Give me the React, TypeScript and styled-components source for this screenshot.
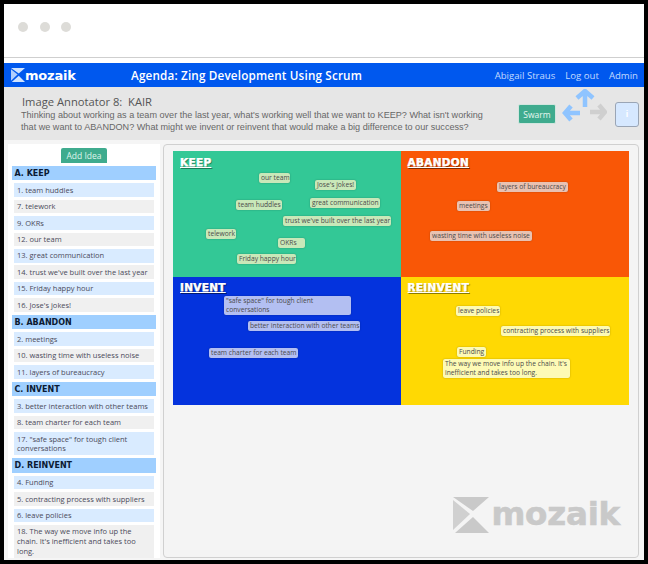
import styled, { createGlobalStyle } from 'styled-components';

const GlobalStyle = createGlobalStyle`
  html, body {
    margin: 0;
    padding: 0;
    background: #000;
  }
  * {
    box-sizing: border-box;
  }
`;

const Frame = styled.div`
  width: 648px;
  height: 564px;
  padding: 4px 4px 4px;
  background: #000;
  overflow: hidden;
`;

const Win = styled.div`
  height: 556px;
  background: #f5f5f5;
  display: flex;
  flex-direction: column;
  overflow: hidden;
`;

const Chrome = styled.div`
  height: 59px;
  padding-bottom: 5px;
  background: #fff;
  flex: none;
`;

const ChromeBar = styled.div`
  height: 54px;
  border-bottom: 1.5px solid #cfcfcf;
  padding: 18px 0 0 14px;
  display: flex;
  gap: 11.5px;
`;

const Dot = styled.span`
  width: 10px;
  height: 10px;
  border-radius: 50%;
  background: #dddcd8;
`;

const Nav = styled.div`
  height: 24px;
  flex: none;
  background: #0058ee;
  display: flex;
  align-items: center;
  padding: 0 6px 0 7px;
  color: #fff;
`;

const Brand = styled.div`
  width: 120px;
  display: flex;
  align-items: center;
  font: bold 13px 'DejaVu Sans', sans-serif;
  letter-spacing: -0.2px;
`;

const NavTitle = styled.div`
  flex: 1;
  font: 600 11.7px 'Open Sans', sans-serif;
  letter-spacing: 0.17px;
`;

const NavLink = styled.a`
  margin-left: 10px;
  font: 9.6px 'Open Sans', sans-serif;
  color: #c3dbff;
`;

const Header = styled.div`
  height: 53px;
  flex: none;
  background: #e6e6e6;
  display: flex;
  padding: 8px 6px 0 17px;
`;

const HeaderText = styled.div`
  width: 497px;
  flex: none;
  color: #666;
`;

const HeaderTitle = styled.div`
  font: 11.2px/13px 'Open Sans', sans-serif;
  color: #555;
  padding-left: 1px;
`;

const Prompt = styled.div`
  font: 9.1px/12px 'Liberation Sans', sans-serif;
  color: #666;
  margin-top: 1px;
  white-space: nowrap;
`;

const SwarmBtn = styled.button`
  width: 38px;
  height: 20px;
  flex: none;
  margin-top: 9px;
  padding: 0;
  background: #3fab8e;
  border: 1px solid #d2e6df;
  border-radius: 2px;
  color: #e6f7f0;
  font: 8.5px 'Open Sans', sans-serif;
`;

const Arrows = styled.svg`
  width: 46px;
  height: 34px;
  margin: -6px 0 0 5px;
  flex: none;
`;

const InfoBtn = styled.div`
  width: 24px;
  height: 25px;
  flex: none;
  margin: 7px 0 0 8px;
  background: #d6e8ff;
  border: 1px solid #9aa5b5;
  border-radius: 3px;
  color: #fff;
  font: bold 9px/23px 'Liberation Sans', sans-serif;
  text-align: center;
`;

const Body = styled.div`
  flex: 1;
  min-height: 0;
  display: flex;
  padding: 4px 5px 2px 4px;
  gap: 3px;
`;

const Sidebar = styled.div`
  width: 152px;
  flex: none;
  padding: 4px 4px 0;
  background: #fff;
  overflow: hidden;
  display: flex;
  flex-direction: column;
`;

const AddIdea = styled.button`
  align-self: center;
  width: 46px;
  height: 15px;
  flex: none;
  padding: 0;
  margin-bottom: 3px;
  background: #3fab8e;
  border: 0;
  border-radius: 2px 2px 0 0;
  color: #dff5ec;
  font: 8.5px 'Open Sans', sans-serif;
`;

const SectionHead = styled.div`
  height: 14.4px;
  flex: none;
  padding-left: 2.5px;
  background: #9fcfff;
  color: #0b1a33;
  font: bold 8px/15.4px 'DejaVu Sans', sans-serif;
`;

const ItemList = styled.div`
  display: flex;
  flex-direction: column;
  gap: 2.8px;
  padding: 3px 2px 3.2px;
`;

const Item = styled.div<{ $alt: boolean }>`
  padding: 2.5px 3px 1.5px;
  background: ${(p) => (p.$alt ? '#f0f0f0' : '#d9ebff')};
  color: #4a4a5a;
  font: 7.5px/9.6px 'Open Sans', sans-serif;
`;

const Panel = styled.div`
  flex: 1;
  position: relative;
  padding: 6px 9px;
  border: 1px solid #d0d0d0;
  border-radius: 4px;
  background: #f4f4f4;
`;

const Board = styled.div`
  position: relative;
  width: 456px;
  height: 254px;
  display: grid;
  grid-template-columns: 227.5px 228.5px;
  grid-template-rows: 125.5px 128.5px;
`;

const Quadrant = styled.div<{ $bg: string }>`
  display: flex;
  align-items: flex-start;
  padding: 5.5px 7px;
  background: ${(p) => p.$bg};
`;

const QuadTitle = styled.span<{ $shadow: string }>`
  color: #fff;
  font: bold 10.5px/11px 'DejaVu Sans', sans-serif;
  letter-spacing: 0.3px;
  -webkit-text-stroke: 0.25px #fff;
  text-decoration: underline;
  text-decoration-skip-ink: none;
  text-shadow: 1px 1px 1px ${(p) => p.$shadow};
`;

const Note = styled.div<{ $bg: string; $wrap: boolean }>`
  position: absolute;
  padding: 0.3px 2px;
  background: ${(p) => p.$bg};
  border-radius: 2px;
  box-shadow: 0 0 1.5px rgba(0, 0, 0, 0.35);
  color: #4a4a4a;
  font: 6.7px/9px 'Open Sans', sans-serif;
  white-space: ${(p) => (p.$wrap ? 'normal' : 'nowrap')};
`;

const Watermark = styled.div`
  position: absolute;
  right: 18px;
  bottom: 24px;
  display: flex;
  align-items: flex-start;
  gap: 2px;
  color: #c9c9c9;
`;

const WatermarkText = styled.span`
  font: bold 32.5px/34px 'DejaVu Sans', sans-serif;
  -webkit-text-stroke: 0.6px #c9c9c9;
  letter-spacing: -0.2px;
`;

function LogoMark({ size, color, gap }: { size: number; color: string; gap: string }) {
  return (
    <svg width={size} height={size} viewBox="0 0 36 36" style={{ flex: 'none' }}>
      <path d="M0 0H36L20 14 0 0Z" fill={color} />
      <path d="M0 3V33L17 17 0 3Z" fill={color} opacity="0.85" />
      <path d="M2 36H36L20 20 2 36Z" fill={color} />
      <path d="M0 36L18 17" stroke={gap} strokeWidth="1" />
    </svg>
  );
}

const sections = [
  {
    head: 'A. KEEP',
    items: [
      '1. team huddles',
      '7. telework',
      '9. OKRs',
      '12. our team',
      '13. great communication',
      "14. trust we've built over the last year",
      '15. Friday happy hour',
      "16. Jose's jokes!",
    ],
  },
  {
    head: 'B. ABANDON',
    items: ['2. meetings', '10. wasting time with useless noise', '11. layers of bureaucracy'],
  },
  {
    head: 'C. INVENT',
    items: [
      '3. better interaction with other teams',
      '8. team charter for each team',
      '17. "safe space" for tough client conversations',
    ],
  },
  {
    head: 'D. REINVENT',
    items: [
      '4. Funding',
      '5. contracting process with suppliers',
      '6. leave policies',
      "18. The way we move info up the chain. It's inefficient and takes too long.",
    ],
  },
];

const quadrants = [
  { title: 'KEEP', bg: '#33c896', shadow: '#1c7a58' },
  { title: 'ABANDON', bg: '#f95706', shadow: '#7a2a00' },
  { title: 'INVENT', bg: '#0433dd', shadow: '#021a70' },
  { title: 'REINVENT', bg: '#ffd903', shadow: '#8a7a00' },
];

const GREEN = '#c9e8b9';
const ORANGE = '#e9c2b2';
const BLUE = '#b3bff2';
const YELLOW = '#fdfab5';

// page coordinates from the reference, board origin is 173,151
const notes = [
  { text: 'our team', x: 259, y: 173, w: 31, bg: GREEN },
  { text: "Jose's jokes!", x: 315, y: 180, w: 41, bg: GREEN },
  { text: 'team huddles', x: 236, y: 200, w: 46, bg: GREEN },
  { text: 'great communication', x: 310, y: 198, w: 70, bg: GREEN },
  { text: "trust we've built over the last year", x: 283, y: 216, w: 108, bg: GREEN },
  { text: 'telework', x: 206, y: 229, w: 30, bg: GREEN },
  { text: 'OKRs', x: 278, y: 238, w: 27, bg: GREEN },
  { text: 'Friday happy hour', x: 237, y: 254, w: 59, bg: GREEN },
  { text: 'layers of bureaucracy', x: 497, y: 182, w: 71, bg: ORANGE },
  { text: 'meetings', x: 457, y: 201, w: 33, bg: ORANGE },
  { text: 'wasting time with useless noise', x: 430, y: 231, w: 102, bg: ORANGE },
  { text: '"safe space" for tough client conversations', x: 224, y: 296, w: 127, bg: BLUE, wrap: true },
  { text: 'better interaction with other teams', x: 248, y: 321, w: 112, bg: BLUE },
  { text: 'team charter for each team', x: 209, y: 348, w: 89, bg: BLUE },
  { text: 'leave policies', x: 456, y: 306, w: 44, bg: YELLOW },
  { text: 'contracting process with suppliers', x: 501, y: 326, w: 109, bg: YELLOW },
  { text: 'Funding', x: 457, y: 347, w: 29, bg: YELLOW },
  { text: "The way we move info up the chain. It's inefficient and takes too long.", x: 443, y: 359, w: 127, bg: YELLOW, wrap: true },
];

export default function App() {
  return (
    <Frame>
      <GlobalStyle />
      <Win>
        <Chrome>
          <ChromeBar>
            <Dot />
            <Dot />
            <Dot />
          </ChromeBar>
        </Chrome>
        <Nav>
          <Brand>
            <LogoMark size={14} color="#cfe3ff" gap="#0058ee" />
            mozaik
          </Brand>
          <NavTitle>Agenda: Zing Development Using Scrum</NavTitle>
          <NavLink>Abigail Straus</NavLink>
          <NavLink>Log out</NavLink>
          <NavLink>Admin</NavLink>
        </Nav>
        <Header>
          <HeaderText>
            <HeaderTitle>Image Annotator 8:&nbsp; KAIR</HeaderTitle>
            <Prompt>
              Thinking about working as a team over the last year, what's working well that we want to KEEP? What isn't working
              <br />
              that we want to ABANDON? What might we invent or reinvent that would make a big difference to our success?
            </Prompt>
          </HeaderText>
          <SwarmBtn>Swarm</SwarmBtn>
          <Arrows viewBox="0 0 46 34">
            <g fill="none" strokeWidth="4.5" strokeLinecap="butt" strokeLinejoin="miter">
              <path d="M24 18V3M16 9L24 2L32 9" stroke="#8fc4ff" />
              <path d="M19 24H5M10 17L4 24L10 31" stroke="#8fc4ff" />
              <path d="M29 23H43M38 16L44 23L38 30" stroke="#cfcfcf" />
            </g>
          </Arrows>
          <InfoBtn>i</InfoBtn>
        </Header>
        <Body>
          <Sidebar>
            <AddIdea>Add Idea</AddIdea>
            {sections.map((section) => (
              <div key={section.head}>
                <SectionHead>{section.head}</SectionHead>
                <ItemList>
                  {section.items.map((item, i) => (
                    <Item key={item} $alt={i % 2 === 1}>
                      {item}
                    </Item>
                  ))}
                </ItemList>
              </div>
            ))}
          </Sidebar>
          <Panel>
            <Board>
              {quadrants.map((q) => (
                <Quadrant key={q.title} $bg={q.bg}>
                  <QuadTitle $shadow={q.shadow}>{q.title}</QuadTitle>
                </Quadrant>
              ))}
              {notes.map((n) => (
                <Note
                  key={n.text}
                  $bg={n.bg}
                  $wrap={!!n.wrap}
                  style={{ left: n.x - 173, top: n.y - 151, width: n.w }}
                >
                  {n.text}
                </Note>
              ))}
            </Board>
            <Watermark>
              <LogoMark size={36} color="#c9c9c9" gap="#f4f4f4" />
              <WatermarkText>mozaik</WatermarkText>
            </Watermark>
          </Panel>
        </Body>
      </Win>
    </Frame>
  );
}
